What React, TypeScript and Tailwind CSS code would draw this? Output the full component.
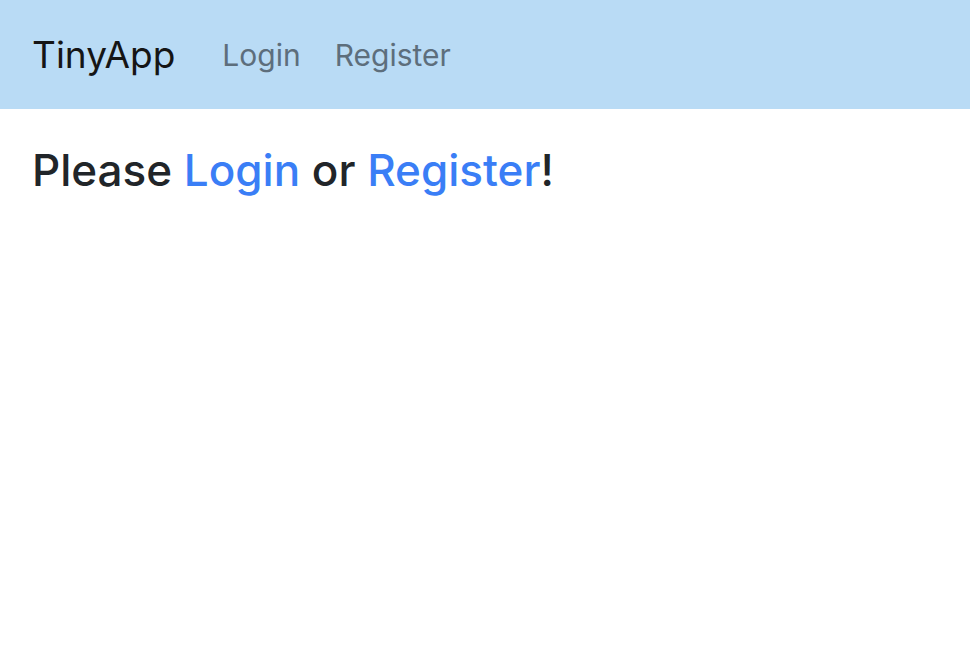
export default function App() {
  return (
    <div className="min-h-screen bg-white font-['Inter','Liberation_Sans',sans-serif]">
      <nav className="flex h-[109px] items-center bg-[#b9dbf5] px-[32px]">
        <a href="#" className="mr-[47px] text-[37px] leading-none text-[#151515]">
          TinyApp
        </a>
        <div className="flex items-center gap-[34px] text-[30px] leading-none text-[#5d6e7c]">
          <a href="#">Login</a>
          <a href="#">Register</a>
        </div>
      </nav>
      <main className="px-[32px] pt-[35px]">
        <h4 className="text-[44px] leading-[1.2] font-medium text-[#212529]">
          Please <a href="#" className="text-[#3a7ef6]">Login</a> or{" "}
          <a href="#" className="text-[#3a7ef6]">Register</a>!
        </h4>
      </main>
    </div>
  );
}
